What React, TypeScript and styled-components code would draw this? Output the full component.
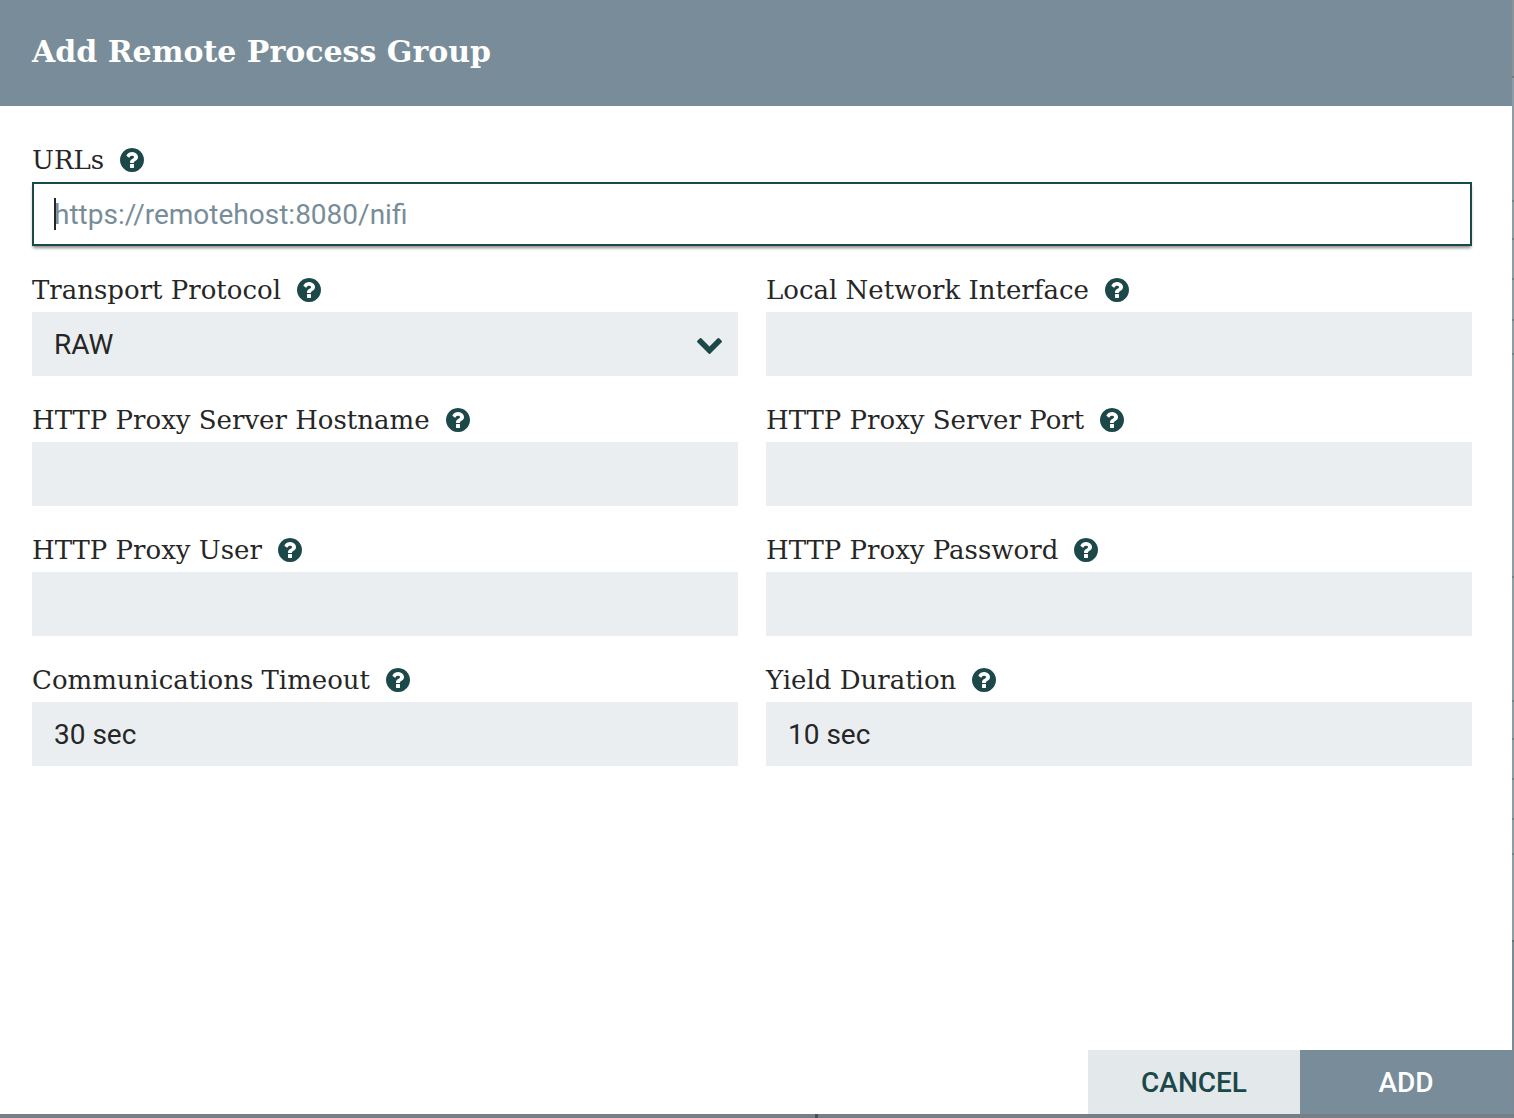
import React, { useId } from "react";
import styled, { createGlobalStyle } from "styled-components";

const slab = `"Roboto Slab", "DejaVu Serif", serif`;
const sans = `Roboto, "Liberation Sans", sans-serif`;
const teal = "#1c484a";
const slate = "#788d99";

// The dimmed canvas behind the dialog: y positions where its rows meet the right edge.
const canvasTicks = [200, 238, 278, 319, 353, 576, 700, 738, 778, 818, 853]
  .map((y) => `linear-gradient(#70828b, #70828b) 100% ${y}px / 2px 2px no-repeat`)
  .join(", ");

const GlobalStyle = createGlobalStyle`
  *, *::before, *::after { box-sizing: border-box; }
  body { margin: 0; font-family: ${sans}; color: #262626; }
`;

const Backdrop = styled.div`
  display: flex;
  min-height: 100vh;
  padding: 0 2px 4px 0;
  background:
    linear-gradient(#3f5559, #3f5559) 815px 100% / 3px 4px no-repeat,
    linear-gradient(#757f85, #757f85) 0 100% / 100% 4px no-repeat,
    ${canvasTicks},
    linear-gradient(#8a9397 76px, #707c82 76px, #707c82 78px, #8e9ca6 78px, #8e9ca6 940px, #5f7179 940px, #5f7179 942px, #7b8b95 942px);
`;

const Dialog = styled.form`
  flex: 1;
  display: flex;
  flex-direction: column;
  background: #fff;
`;

const Header = styled.header`
  padding: 28px 32px 30px;
  background: ${slate};
`;

const Title = styled.h1`
  margin: 0;
  font: 700 30px/48px ${slab};
  color: #fff;
`;

const Body = styled.main`
  flex: 1;
  display: grid;
  grid-template-columns: 1fr 1fr;
  align-content: start;
  gap: 26px 28px;
  padding: 36px 40px 36px 32px;
`;

const FieldBox = styled.div<{ $wide?: boolean }>`
  grid-column: ${(p) => (p.$wide ? "1 / -1" : "auto")};
  display: flex;
  flex-direction: column;
  gap: 4px;
  min-width: 0;
`;

const LabelRow = styled.div`
  display: flex;
  align-items: center;
  gap: 16px;
`;

const Label = styled.label`
  font: 400 26px/36px ${slab};
  white-space: nowrap;
`;

const HelpIcon = styled.svg`
  width: 24px;
  height: 24px;
  fill: ${teal};
`;

const Control = styled.div`
  position: relative;
  display: flex;
`;

const TextInput = styled.input`
  width: 100%;
  height: 64px;
  padding: 0 20px;
  border: 2px solid #eaeef0;
  border-radius: 0;
  outline: none;
  background: #eaeef0;
  font: 400 28px/32px ${sans};
  color: #262626;

  &::placeholder {
    color: ${slate};
    opacity: 1;
  }
`;

const UrlInput = styled(TextInput)`
  border-color: ${teal};
  background: #fff;
  box-shadow: 0 3px 3px -1px rgba(0, 0, 0, 0.45);
  caret-color: transparent;
`;

const Caret = styled.span`
  position: absolute;
  left: 22px;
  top: 16px;
  width: 2px;
  height: 32px;
  background: #262626;
`;

const Select = styled.select`
  width: 100%;
  height: 64px;
  padding: 2px 22px 0;
  border: 0;
  border-radius: 0;
  appearance: none;
  background: #eaeef0;
  font: 400 28px/32px ${sans};
  color: #262626;
`;

const Chevron = styled.svg`
  position: absolute;
  right: 16px;
  top: 26px;
  width: 25px;
  height: 16px;
  fill: ${teal};
  pointer-events: none;
`;

const Footer = styled.footer`
  display: flex;
  justify-content: flex-end;
`;

const Button = styled.button<{ $primary?: boolean }>`
  width: 212px;
  height: 64px;
  padding: 2px 0 0;
  border: 0;
  background: ${(p) => (p.$primary ? slate : "#e3e8eb")};
  color: ${(p) => (p.$primary ? "#fff" : teal)};
  font: 500 28px/32px ${sans};
  text-transform: uppercase;
`;

function Help() {
  return (
    <HelpIcon viewBox="128 128 1536 1536" aria-hidden="true">
      <path d="M1024 1376v-192q0-14-9-23t-23-9h-192q-14 0-23 9t-9 23v192q0 14 9 23t23 9h192q14 0 23-9t9-23zm256-672q0-88-55.5-163t-138.5-116-170-41q-243 0-371 213-15 24 8 42l132 100q7 6 19 6 16 0 25-12 53-68 86-92 34-24 86-24 48 0 85.5 26t37.5 59q0 38-20 61t-68 45q-63 28-115.5 86.5t-52.5 125.5v36q0 14 9 23t23 9h192q14 0 23-9t9-23q0-19 21.5-49.5t54.5-49.5q32-18 49-28.5t46-35 44.5-48 28-60.5 12.5-81zm384 192q0 209-103 385.5t-279.5 279.5-385.5 103-385.5-103-279.5-279.5-103-385.5 103-385.5 279.5-279.5 385.5-103 385.5 103 279.5 279.5 103 385.5z" />
    </HelpIcon>
  );
}

type FieldProps = {
  label: string;
  wide?: boolean;
  children: (id: string) => React.ReactNode;
};

function Field({ label, wide, children }: FieldProps) {
  const id = useId();
  return (
    <FieldBox $wide={wide}>
      <LabelRow>
        <Label htmlFor={id}>{label}</Label>
        <Help />
      </LabelRow>
      <Control>{children(id)}</Control>
    </FieldBox>
  );
}

const textFields = [
  { label: "Local Network Interface", value: "" },
  { label: "HTTP Proxy Server Hostname", value: "" },
  { label: "HTTP Proxy Server Port", value: "" },
  { label: "HTTP Proxy User", value: "" },
  { label: "HTTP Proxy Password", value: "", type: "password" },
  { label: "Communications Timeout", value: "30 sec" },
  { label: "Yield Duration", value: "10 sec" },
];

export default function App() {
  return (
    <>
      <GlobalStyle />
      <Backdrop>
        <Dialog onSubmit={(e) => e.preventDefault()}>
          <Header>
            <Title>Add Remote Process Group</Title>
          </Header>
          <Body>
            <Field label="URLs" wide>
              {(id) => (
                <>
                  <UrlInput id={id} type="text" placeholder="https://remotehost:8080/nifi" />
                  <Caret />
                </>
              )}
            </Field>
            <Field label="Transport Protocol">
              {(id) => (
                <>
                  <Select id={id} defaultValue="RAW">
                    <option>RAW</option>
                    <option>HTTP</option>
                  </Select>
                  <Chevron viewBox="90 533 1612 1035" aria-hidden="true">
                    <path d="M1683 808l-742 741q-19 19-45 19t-45-19l-742-741q-19-19-19-45.5t19-45.5l166-165q19-19 45-19t45 19l531 531 531-531q19-19 45-19t45 19l166 165q19 19 19 45.5t-19 45.5z" />
                  </Chevron>
                </>
              )}
            </Field>
            {textFields.map((f) => (
              <Field key={f.label} label={f.label}>
                {(id) => <TextInput id={id} type={f.type ?? "text"} defaultValue={f.value} />}
              </Field>
            ))}
          </Body>
          <Footer>
            <Button type="button">Cancel</Button>
            <Button type="submit" $primary>
              Add
            </Button>
          </Footer>
        </Dialog>
      </Backdrop>
    </>
  );
}
